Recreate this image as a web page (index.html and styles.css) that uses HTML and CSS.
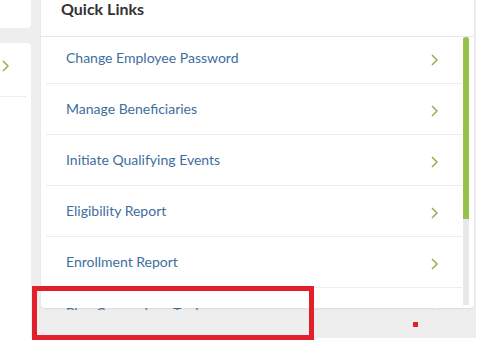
FILE: index.html
```html
<!DOCTYPE html>
<html>
<head>
<meta charset="utf-8">
<link rel="stylesheet" href="styles.css">
</head>
<body>
<div class="page">
  <div class="left">
    <div class="card-top"></div>
    <div class="card-side">
      <div class="side-row">
        <svg class="chev-side" width="7" height="12" viewBox="0 0 7 12"><path d="M1 1 L6 6 L1 11" fill="none" stroke="#8fb04c" stroke-width="1.5"/></svg>
      </div>
    </div>
  </div>
  <div class="main">
    <div class="header"><span class="title">Quick Links</span></div>
    <div class="body">
      <div class="list-wrap">
        <ul class="list">
          <li class="row"><a class="link">Change Employee Password</a><svg class="chev" width="7" height="12" viewBox="0 0 7 12"><path d="M1 1 L6 6 L1 11" fill="none" stroke="#8fb04c" stroke-width="1.5"/></svg></li>
          <li class="row"><a class="link">Manage Beneficiaries</a><svg class="chev" width="7" height="12" viewBox="0 0 7 12"><path d="M1 1 L6 6 L1 11" fill="none" stroke="#8fb04c" stroke-width="1.5"/></svg></li>
          <li class="row"><a class="link">Initiate Qualifying Events</a><svg class="chev" width="7" height="12" viewBox="0 0 7 12"><path d="M1 1 L6 6 L1 11" fill="none" stroke="#8fb04c" stroke-width="1.5"/></svg></li>
          <li class="row"><a class="link">Eligibility Report</a><svg class="chev" width="7" height="12" viewBox="0 0 7 12"><path d="M1 1 L6 6 L1 11" fill="none" stroke="#8fb04c" stroke-width="1.5"/></svg></li>
          <li class="row"><a class="link">Enrollment Report</a><svg class="chev" width="7" height="12" viewBox="0 0 7 12"><path d="M1 1 L6 6 L1 11" fill="none" stroke="#8fb04c" stroke-width="1.5"/></svg></li>
          <li class="row"><a class="link">Plan Comparison Tool</a><svg class="chev" width="7" height="12" viewBox="0 0 7 12"><path d="M1 1 L6 6 L1 11" fill="none" stroke="#8fb04c" stroke-width="1.5"/></svg></li>
        </ul>
      </div>
      <div class="track"><div class="thumb"></div></div>
    </div>
  </div>
</div>
<div class="highlight"></div>
<div class="marker"></div>
</body>
</html>
```

FILE: styles.css
```css
html, body {
  margin: 0;
  padding: 0;
  background: #ffffff;
  font-family: Lato, "Open Sans", sans-serif;
}
.page {
  width: 476px;
  height: 338px;
  background: #eeeeee;
  display: flex;
  gap: 10px;
}
.left {
  width: 31px;
  display: flex;
  flex-direction: column;
  gap: 15px;
}
.card-top {
  height: 28px;
  background: #fff;
  border-bottom-right-radius: 4px;
}
.card-side {
  flex: 1;
  background: #fff;
  border-top-right-radius: 4px;
}
.side-row {
  height: 54px;
  width: 26px;
  border-bottom: 1px solid #ececec;
  display: flex;
  align-items: center;
  padding: 0 0 8px 2px;
  box-sizing: border-box;
}
.main {
  width: 433px;
  height: 308px;
  background: #fff;
  border-bottom-left-radius: 4px;
  border-bottom-right-radius: 4px;
  box-shadow: 0 1px 2px rgba(0,0,0,0.08);
  display: flex;
  flex-direction: column;
}
.header {
  height: 36px;
  flex: none;
  border-bottom: 1px solid #e8e8e8;
  padding-left: 20px;
}
.title {
  display: block;
  font-weight: 700;
  font-size: 16px;
  line-height: 18px;
  color: #333333;
}
.body {
  flex: 1;
  min-height: 0;
  display: flex;
}
.list-wrap {
  flex: 1;
  overflow: hidden;
  padding-left: 5px;
  margin-bottom: -2px;
}
.list {
  list-style: none;
  margin: -4px 0 0 0;
  padding: 0;
}
.row {
  height: 50px;
  border-bottom: 1px solid #ececec;
  display: flex;
  align-items: center;
  justify-content: space-between;
  padding: 0 24px 0 20px;
}
.link {
  color: #3d6e9e;
  font-size: 14px;
  position: relative;
  top: -1px;
}
.chev {
  position: relative;
  top: 2px;
}
.track {
  width: 6px;
  margin: 0 5px 3px 1px;
  background: #e8e8e8;
}
.thumb {
  height: 182px;
  background: #97c14a;
  border-radius: 3px 3px 0 0;
}
.highlight {
  position: absolute;
  left: 32px;
  top: 286px;
  width: 282px;
  height: 54px;
  border: 5px solid #e2202b;
  box-sizing: border-box;
}
.marker {
  position: absolute;
  left: 413px;
  top: 322px;
  width: 5px;
  height: 5px;
  background: #e2202b;
}
```
